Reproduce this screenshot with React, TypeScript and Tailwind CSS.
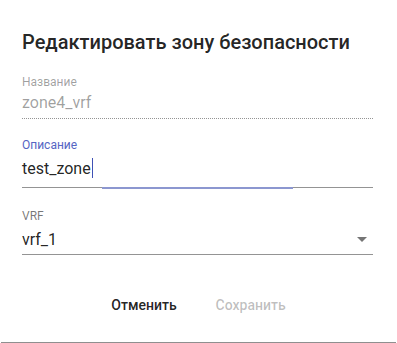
import React from "react";

export default function App() {
  return (
    <div
      className="w-[397px] h-[343px] bg-white flex flex-col overflow-hidden"
      style={{ fontFamily: "Roboto, 'Noto Sans', sans-serif" }}
    >
      <div className="px-[22px] pt-[26px] text-[20px] leading-[32px] font-medium text-[rgba(0,0,0,0.87)]">
        Редактировать зону безопасности
      </div>

      {/* Field 1 - disabled */}
      <div className="mx-[22px] mt-[17px] w-[351px]">
        <div className="text-[12px] leading-[14px] text-[rgba(0,0,0,0.38)]">Название</div>
        <div className="mt-[4px] text-[16px] leading-[19px] text-[rgba(0,0,0,0.38)]">zone4_vrf</div>
        <div className="mt-[6px] border-b border-dotted border-[rgba(0,0,0,0.42)]" />
      </div>

      {/* Field 2 - focused */}
      <div className="mx-[22px] mt-[19px] w-[351px]">
        <div className="text-[12px] leading-[14px] text-[#5565c3]">Описание</div>
        <div className="mt-[6px] text-[16px] leading-[19px] text-[rgba(0,0,0,0.87)] flex items-center">
          <span>test_zone</span>
          <span className="inline-block w-[1px] h-[20px] bg-[#3f51b5] ml-[1px]" />
        </div>
        <div className="relative mt-[9px] h-[1px] bg-[rgba(0,0,0,0.42)]">
          <div className="absolute left-[80px] w-[191px] top-0 h-[2px] bg-[#8c97d0]" />
        </div>
      </div>

      {/* Field 3 - select */}
      <div className="mx-[22px] mt-[21px] w-[351px]">
        <div className="text-[12px] leading-[14px] text-[rgba(0,0,0,0.54)]">VRF</div>
        <div className="mt-[4px] flex items-center justify-between text-[16px] leading-[19px] text-[rgba(0,0,0,0.87)]">
          <span>vrf_1</span>
          <svg width="24" height="24" viewBox="0 0 24 24" className="mr-[-1px]">
            <path d="M7 10l5 5 5-5z" fill="rgba(0,0,0,0.54)" />
          </svg>
        </div>
        <div className="mt-[3px] h-[1px] bg-[rgba(0,0,0,0.42)]" />
      </div>

      <div className="flex justify-center gap-[23px] mt-[40px]">
        <button className="px-[8px] text-[14px] leading-[20px] font-medium text-[rgba(0,0,0,0.87)]">
          Отменить
        </button>
        <button className="px-[8px] text-[14px] leading-[20px] font-medium text-[rgba(0,0,0,0.26)]">
          Сохранить
        </button>
      </div>

      <div className="flex-1" />
      <div className="mx-[1px] h-[1px] bg-[#8f8f8f]" />
    </div>
  );
}
